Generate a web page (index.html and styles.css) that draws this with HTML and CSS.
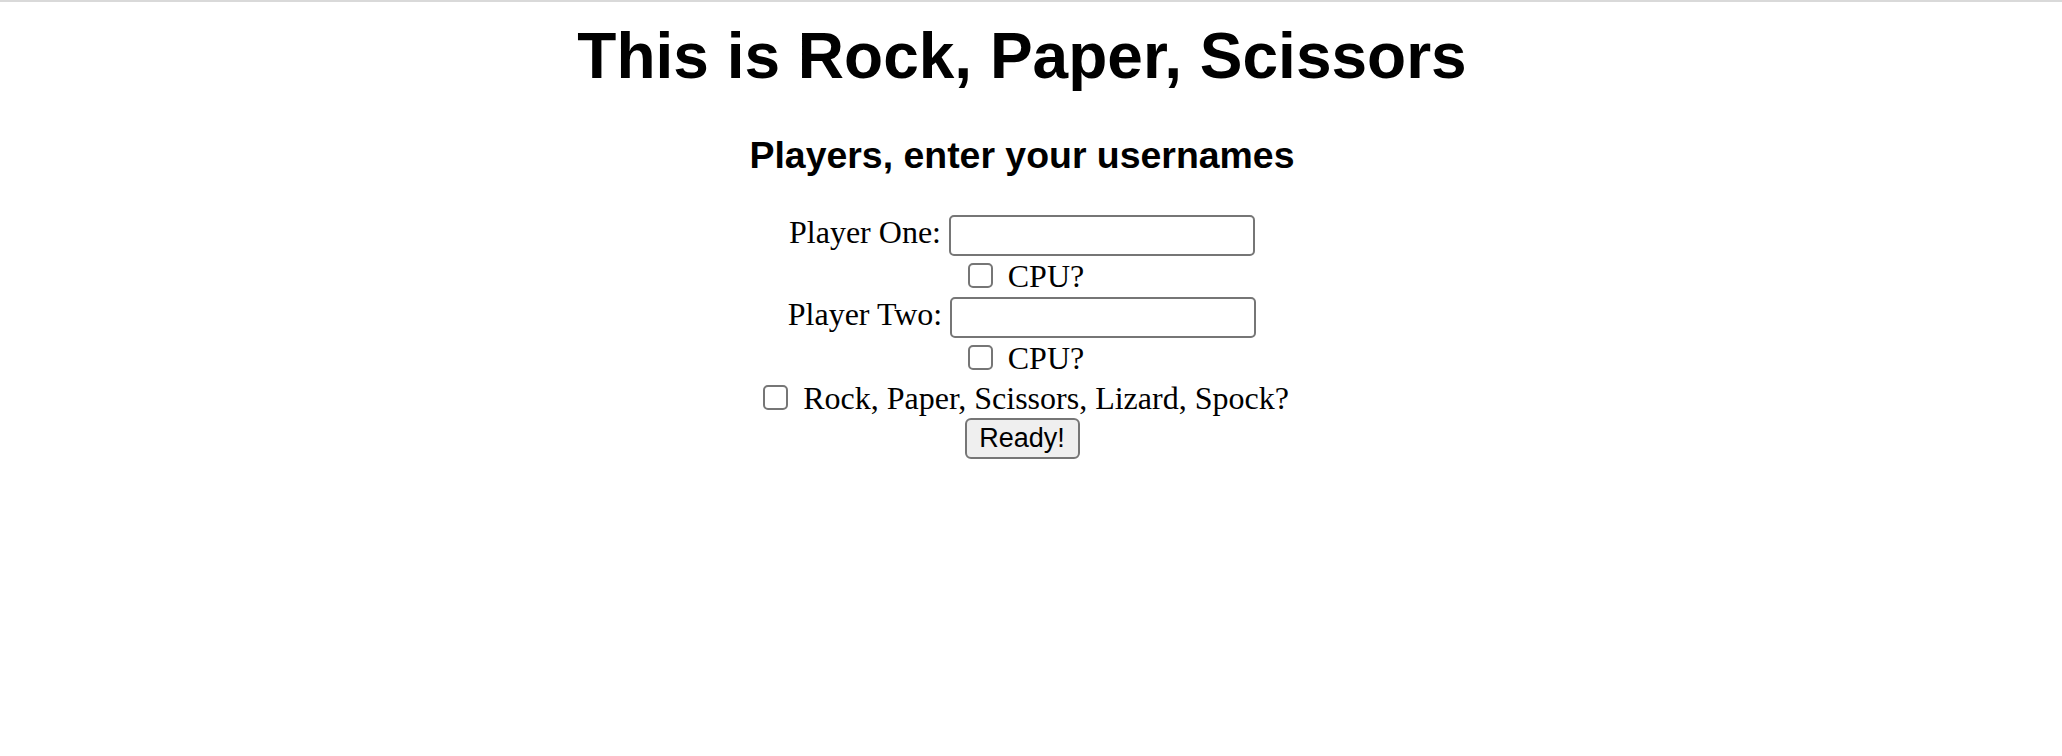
FILE: index.html
```html
<!DOCTYPE html>
<html lang="en">
<head>
<meta charset="utf-8">
<title>Rock, Paper, Scissors</title>
<link rel="stylesheet" href="styles.css">
</head>
<body>
<div class="topline"></div>
<main class="page">
  <h1 class="title">This is Rock, Paper, Scissors</h1>
  <h3 class="subtitle">Players, enter your usernames</h3>
  <form class="form">
    <div class="row row-input">
      <label class="label" for="p1">Player One:</label>
      <input class="text-input" id="p1" type="text">
    </div>
    <div class="row row-check">
      <input class="check" type="checkbox" id="cpu1">
      <label class="check-label" for="cpu1">CPU?</label>
    </div>
    <div class="row row-input">
      <label class="label" for="p2">Player Two:</label>
      <input class="text-input" id="p2" type="text">
    </div>
    <div class="row row-check row-check-last">
      <input class="check" type="checkbox" id="cpu2">
      <label class="check-label" for="cpu2">CPU?</label>
    </div>
    <div class="row row-check row-mode">
      <input class="check" type="checkbox" id="rpsls">
      <label class="check-label" for="rpsls">Rock, Paper, Scissors, Lizard, Spock?</label>
    </div>
    <div class="row row-button">
      <button class="button" type="button">Ready!</button>
    </div>
  </form>
</main>
</body>
</html>
```

FILE: styles.css
```css
html, body {
  margin: 0;
  padding: 0;
  background: #ffffff;
}

body {
  font-family: "Liberation Serif", "Times New Roman", serif;
  font-size: 32px;
  color: #000000;
}

.topline {
  height: 2px;
  background: #d9d9d9;
}

.page {
  width: 2044px;
  display: flex;
  flex-direction: column;
  align-items: center;
}

.title {
  font-family: "Liberation Sans", Arial, Helvetica, sans-serif;
  font-weight: bold;
  font-size: 64px;
  line-height: 74px;
  margin: 17px 0 0 0;
}

.subtitle {
  font-family: "Liberation Sans", Arial, Helvetica, sans-serif;
  font-weight: bold;
  font-size: 37.44px;
  line-height: 43px;
  margin: 41px 0 0 0;
}

.form {
  margin-top: 38px;
  display: flex;
  flex-direction: column;
  align-items: center;
  width: 100%;
}

.row {
  display: flex;
  justify-content: center;
  align-items: flex-start;
  width: 100%;
}

.row-input {
  height: 41px;
  gap: 8px;
}

.label {
  font-size: 32px;
  line-height: 32px;
  margin-top: 1px;
}

.text-input {
  box-sizing: border-box;
  width: 306px;
  height: 41px;
  margin: 0;
  padding: 2px 4px;
  border: 2px solid #767676;
  border-radius: 5px;
  background: #ffffff;
  font-family: "Liberation Sans", Arial, sans-serif;
  font-size: 26.67px;
}

.row-check {
  height: 41px;
}

.row-check-last {
  height: 39px;
}

.check {
  -webkit-appearance: none;
  appearance: none;
  box-sizing: border-box;
  width: 25px;
  height: 25px;
  margin: 7px 15px 0 8px;
  border: 2px solid #767676;
  border-radius: 5px;
  background: #ffffff;
}

.row-mode .check {
  margin-top: 8px;
}

.check-label {
  font-size: 32px;
  line-height: 32px;
  margin-top: 4px;
}

.row-mode .check-label {
  margin-top: 5px;
}

.row-button {
  height: 41px;
}

.button {
  box-sizing: border-box;
  height: 41px;
  width: 115px;
  margin: 0;
  padding: 0 12px;
  border: 2px solid #767676;
  border-radius: 6px;
  background: #efefef;
  color: #000000;
  font-family: "Liberation Sans", Arial, sans-serif;
  font-size: 27px;
  line-height: 37px;
}
```
